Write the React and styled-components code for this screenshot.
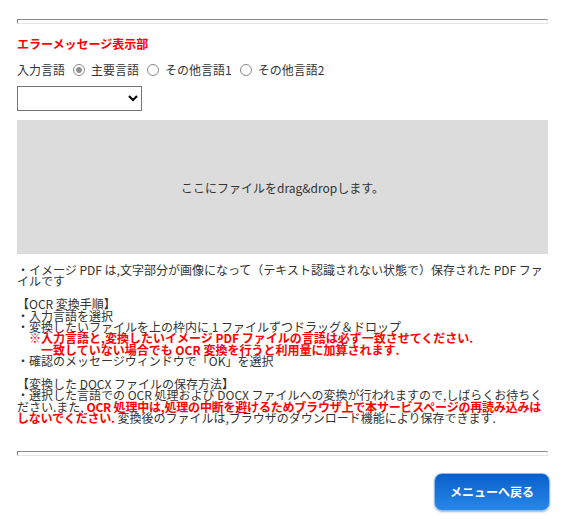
import styled, { createGlobalStyle } from 'styled-components';

const GlobalStyle = createGlobalStyle`
  html, body {
    margin: 0;
    padding: 0;
    background: #fff;
  }

  body {
    font-family: "Noto Sans CJK JP", "Noto Sans", sans-serif;
    font-size: 12px;
    color: #333;
  }
`;

const Page = styled.div`
  padding: 19px 17px 8px;
  box-sizing: border-box;
  width: 565px;
`;

const Rule = styled.div`
  height: 3px;
  border: 1px solid;
  border-color: #8c8c8c #e6e6e6 #e6e6e6 #8c8c8c;
  margin-top: ${(props) => props.$top || 0}px;
`;

const ErrorMessage = styled.p`
  margin: 12px 0 0;
  line-height: 16px;
  font-weight: 700;
  color: #f00;
`;

const LanguageRow = styled.div`
  display: flex;
  align-items: center;
  margin-top: 10px;
  height: 16px;
  line-height: 16px;
`;

const RadioLabel = styled.label`
  display: flex;
  align-items: center;
`;

const Radio = styled.input.attrs({ type: 'radio' })`
  appearance: none;
  width: 12px;
  height: 12px;
  margin: 0 6px 0 8px;
  border: 1px solid #8a8a8a;
  border-radius: 50%;
  box-sizing: border-box;
  background: #fff;

  &:checked {
    background: radial-gradient(circle, #8f8f8f 0 2.6px, #fff 3.2px);
  }
`;

const LanguageSelect = styled.select`
  display: block;
  margin-top: 8px;
  width: 125px;
  height: 25px;
  border: 1px solid #767676;
  border-radius: 0;
  background: #fff;
  font-family: inherit;
  font-size: 12px;
`;

const DropZone = styled.div`
  margin-top: 9px;
  height: 134px;
  background: #dcdcdc;
  display: flex;
  align-items: center;
  justify-content: center;
`;

const Notes = styled.div`
  margin-top: 10px;
  line-height: 11.4px;
`;

const Line = styled.p`
  margin: 0;
`;

const Blank = styled.div`
  height: 11.4px;
`;

const Warning = styled.p`
  margin: 0;
  padding-left: 24px;
  text-indent: -12px;
  color: #f00;
  font-weight: 700;
`;

const Strong = styled.b`
  color: #f00;
  font-weight: 700;
  letter-spacing: -0.2px;
`;

const Footer = styled.div`
  display: flex;
  justify-content: flex-end;
  margin-top: 17px;
  margin-right: -2px;
`;

const BackButton = styled.button`
  width: 116px;
  height: 38px;
  border: 1px solid #8db9ee;
  border-radius: 8px;
  background: linear-gradient(180deg, #0a5fca 0%, #1873da 50%, #2887e8 100%);
  box-shadow: 0 1px 2px rgba(0, 0, 0, 0.3);
  color: #fff;
  font-family: inherit;
  font-size: 12px;
  font-weight: 700;
  cursor: pointer;
`;

export default function App() {
  return (
    <>
      <GlobalStyle />
      <Page>
        <Rule />
        <ErrorMessage>エラーメッセージ表示部</ErrorMessage>
        <LanguageRow>
          <span>入力言語</span>
          <RadioLabel>
            <Radio name="lang" defaultChecked />
            主要言語
          </RadioLabel>
          <RadioLabel>
            <Radio name="lang" />
            その他言語1
          </RadioLabel>
          <RadioLabel>
            <Radio name="lang" />
            その他言語2
          </RadioLabel>
        </LanguageRow>
        <LanguageSelect defaultValue="">
          <option value="" />
        </LanguageSelect>
        <DropZone>ここにファイルをdrag&amp;dropします。</DropZone>
        <Notes>
          <Line>・イメージ PDF は,文字部分が画像になって（テキスト認識されない状態で）保存された PDF ファイルです</Line>
          <Blank />
          <Line>【OCR 変換手順】</Line>
          <Line>・入力言語を選択</Line>
          <Line>・変換したいファイルを上の枠内に 1 ファイルずつドラッグ＆ドロップ</Line>
          <Warning>
            ※入力言語と,変換したいイメージ PDF ファイルの言語は必ず一致させてください.
            <br />
            一致していない場合でも OCR 変換を行うと利用量に加算されます.
          </Warning>
          <Line>・確認のメッセージウィンドウで「OK」を選択</Line>
          <Blank />
          <Line>【変換した DOCX ファイルの保存方法】</Line>
          <Line>
            ・選択した言語での OCR 処理および DOCX ファイルへの変換が行われますので,しばらくお待ちください.また,
            {' '}
            <Strong>OCR 処理中は,処理の中断を避けるためブラウザ上で本サービスページの再読み込みはしないでください.</Strong>
            {' '}
            変換後のファイルは,ブラウザのダウンロード機能により保存できます.
          </Line>
        </Notes>
        <Rule $top={27} />
        <Footer>
          <BackButton type="button">メニューへ戻る</BackButton>
        </Footer>
      </Page>
    </>
  );
}
